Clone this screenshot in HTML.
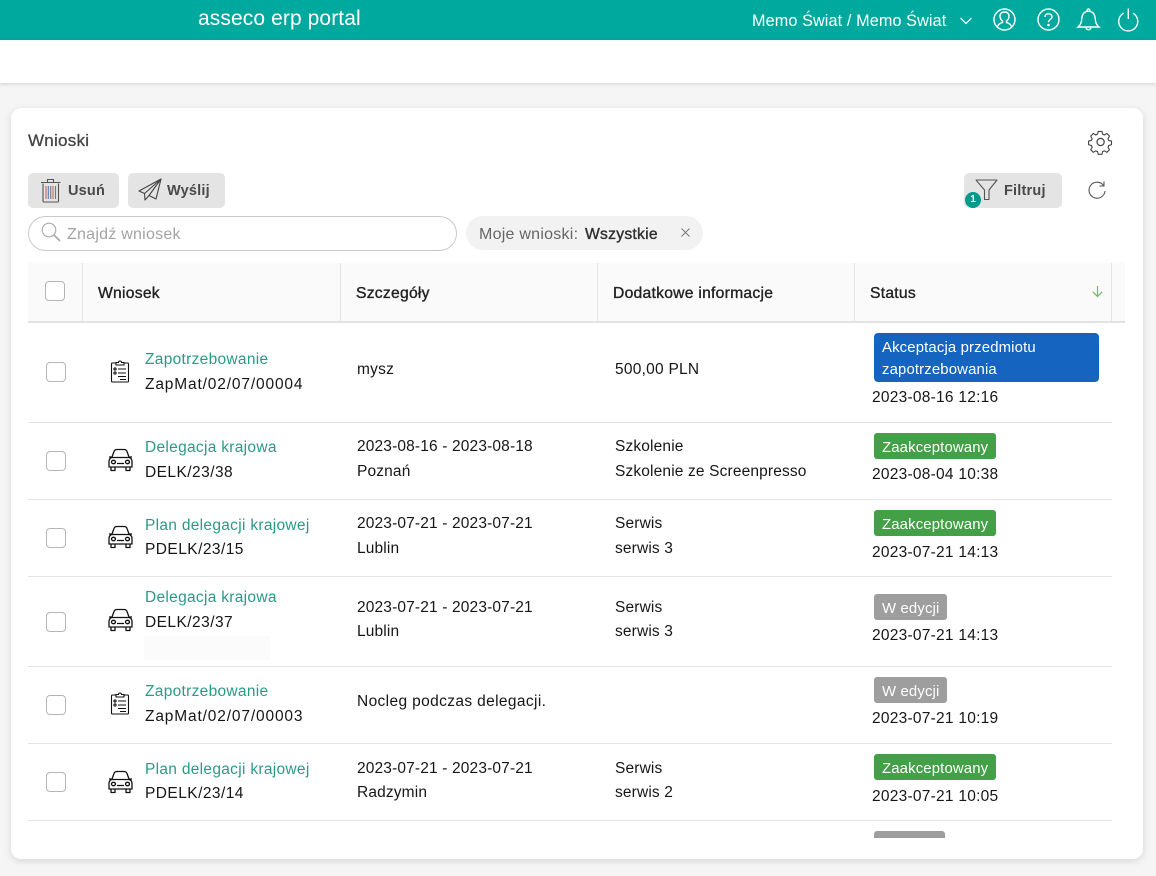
<!DOCTYPE html>
<html><head><meta charset="utf-8"><style>
*{box-sizing:border-box}
html,body{margin:0;padding:0}
body{width:1156px;height:876px;overflow:hidden;background:#f5f5f5;position:relative;font-family:"Liberation Sans",sans-serif;font-size:15.5px;color:#161616}
.a{position:absolute;white-space:nowrap}
.t{position:absolute;white-space:nowrap;line-height:20px;letter-spacing:.25px;margin-top:4px}
.g{color:#2a9a88;letter-spacing:.3px}
.b{font-weight:bold;color:#333;letter-spacing:.2px}
.h{font-size:15.7px;color:#222;-webkit-text-stroke:.35px #222}
.z{letter-spacing:.85px}
.k{letter-spacing:.45px}
.d{letter-spacing:.15px}
.cb{position:absolute;left:46px;width:20px;height:20px;border:1px solid #b5b5b5;border-radius:4px;background:#fff}
.ln{position:absolute;left:28px;width:1084px;height:1px;background:#e3e3e3}
.bd{position:absolute;left:874px;color:#fff;font-size:14.9px;line-height:22px;border-radius:3px;padding:0 8px;white-space:nowrap;height:26px;padding-top:3.5px;letter-spacing:.15px}
.gr{background:#43a047}.gy{background:#9e9e9e}
.btn{position:absolute;background:#e4e4e4;border-radius:5px;height:35px;top:173px}
svg{position:absolute;overflow:visible}
</style></head><body>
<div class="a" style="left:0;top:0;width:1156px;height:40px;background:#00a99d"></div>
<div class="a" style="left:0;top:40px;width:1156px;height:43px;background:#fff;box-shadow:0 1px 4px rgba(0,0,0,.15)"></div>
<div class="a" style="left:198px;top:7px;color:#fff;font-size:21px;line-height:24px;letter-spacing:.1px">asseco erp portal</div>
<div class="a" style="left:752px;top:11px;color:#fff;font-size:16.2px;line-height:20px;letter-spacing:.12px">Memo Świat / Memo Świat</div>
<svg style="left:960px;top:17px" width="12" height="8" fill="none" stroke="#fff" stroke-width="1.2"><path d="M.5 1 6 6.5 11.500 1"/></svg>
<svg style="left:993px;top:8px" width="23" height="23" fill="none" stroke="#fff" stroke-width="1.4"><circle cx="11.500" cy="11.500" r="10.500"/><path d="M4.500 19c.5-3 2.500-3.500 5-4.500v-1.500c-1.500-1-2.500-2.500-2.500-5 0-2.500 1.700-4 4.500-4s4.500 1.500 4.500 4c0 2.500-1 4-2.500 5v1.500c2.500 1 4.500 1.500 5 4.500"/></svg>
<svg style="left:1037px;top:8px" width="23" height="23" fill="none" stroke="#fff" stroke-width="1.4"><circle cx="11.500" cy="11.500" r="10.500"/><path d="M8 9c0-2 1.500-3.200 3.500-3.200s3.500 1.200 3.500 3c0 2.700-3.500 2.700-3.500 5.400"/><circle cx="11.500" cy="17" r=".6" fill="#fff"/></svg>
<svg style="left:1077px;top:8px" width="23" height="23" fill="none" stroke="#fff" stroke-width="1.4"><path d="M1 19c3-2.500 3.500-5 3.800-8.500C5.200 6 7.500 3.300 11.500 3.300S17.800 6 18.200 10.500c.3 3.500.8 6 3.800 8.500Z"/><path d="M10 3.300C10 1.800 10.700 1 11.500 1s1.500.8 1.500 2.300M9 19.500c.3 1.500 1.200 2.200 2.500 2.200s2.200-.7 2.500-2.200"/></svg>
<svg style="left:1118px;top:8px" width="21" height="23" fill="none" stroke="#fff" stroke-width="1.4"><path d="M5.500 5.200a9.500 9.500 0 1 0 9.500 0M10.300 0.500v10.500"/></svg>

<div class="a" style="left:11px;top:108px;width:1132px;height:751px;background:#fff;border-radius:10px;box-shadow:0 2px 8px rgba(0,0,0,.13)"></div>
<div class="t" style="left:28px;top:127px;font-size:17px;color:#444;-webkit-text-stroke:.3px #444">Wnioski</div>
<svg style="left:1089px;top:130px" width="24" height="24" fill="none" stroke="#444" stroke-width="1.200" stroke-linejoin="round"><path d="M9.500 1h4l.7 3 2 .9 2.700-1.600 2.800 2.800-1.600 2.700.8 2.100 3 .6v4l-3 .7-.8 2 1.600 2.700-2.800 2.800-2.700-1.600-2 .8-.7 3h-4l-.7-3-2-.8-2.700 1.600-2.800-2.800 1.600-2.700-.9-2-3-.7v-4l3-.6.9-2.100-1.600-2.700 2.800-2.800 2.700 1.600 2-.9Z" transform="translate(.5 .5) scale(.92)"/><circle cx="11.600" cy="12" r="3.600"/></svg>

<div class="btn" style="left:28px;width:91px"></div>
<svg style="left:40px;top:177px" width="22" height="26" fill="none" stroke="#555" stroke-width="1.100"><path d="M1 5.500h19.500M7.500 5V2.500h6V5M3 6.500V24a1 1 0 0 0 1 1h13.500a1 1 0 0 0 1-1V6.500"/><path d="M6 9v13" stroke="#c66"/><path d="M8.300 9v13" stroke="#57b"/><path d="M10.700 9v13" stroke="#777"/><path d="M13 9v13" stroke="#c66"/><path d="M15.500 9v13" stroke="#57b"/></svg>
<div class="t b" style="left:68px;top:177px;font-size:14.500px;color:#4a4a4a">Usuń</div>
<div class="btn" style="left:128px;width:97px"></div>
<svg style="left:138px;top:178px" width="24" height="24" fill="none" stroke="#444" stroke-width="1.100" stroke-linejoin="round"><path d="M1 13 23 1 18 21 11 17.500 7 22 6.500 15.500Z"/><path d="M23 1 6.500 15.500M23 1 11 17.500"/></svg>
<div class="t b" style="left:167px;top:177px;font-size:14.500px;color:#4a4a4a">Wyślij</div>
<div class="btn" style="left:964px;width:98px"></div>
<svg style="left:975px;top:179px" width="24" height="22" fill="none" stroke="#555" stroke-width="1.100" stroke-linejoin="round"><path d="M1 1h21l-8 10v9.500l-4.500 0V11Z"/></svg>
<div class="a" style="left:965px;top:192px;width:16px;height:16px;border-radius:50%;background:#00998c;color:#fff;font-size:10px;font-weight:bold;line-height:16px;text-align:center">1</div>
<div class="t b" style="left:1004px;top:177px;font-size:14.500px;color:#4a4a4a">Filtruj</div>
<svg style="left:1088px;top:181px" width="18" height="18" fill="none" stroke="#555" stroke-width="1.100"><path d="M15.500 4.500A8 8 0 1 0 17 10"/><path d="M16 .5V5h-4.500"/></svg>

<div class="a" style="left:28px;top:216px;width:429px;height:35px;border:1px solid #c9c9c9;border-radius:18px;background:#fff"></div>
<svg style="left:41px;top:222px" width="20" height="20" fill="none" stroke="#aaa" stroke-width="1.100"><circle cx="8" cy="8" r="6.800"/><path d="M13 13l6 6" stroke-width="1.800"/></svg>
<div class="t" style="left:67px;top:221px;color:#a3a3a3;font-size:16px">Znajdź wniosek</div>
<div class="a" style="left:466px;top:216px;width:237px;height:34px;background:#f2f2f2;border-radius:17px"></div>
<div class="t" style="left:479px;top:221px;color:#666;font-size:16px">Moje wnioski:</div>
<div class="t h" style="left:585px;top:221px;color:#333">Wszystkie</div>
<svg style="left:681px;top:228px" width="9" height="9" stroke="#777" stroke-width="1"><path d="M.5.500l8 8M8.500.500l-8 8"/></svg>

<div class="a" style="left:28px;top:263px;width:1097px;height:60px;background:#fafafa;border-bottom:2px solid #e3e3e3"></div>
<div class="a" style="left:82px;top:263px;width:1px;height:58px;background:#e6e6e6"></div>
<div class="a" style="left:340px;top:263px;width:1px;height:58px;background:#e6e6e6"></div>
<div class="a" style="left:597px;top:263px;width:1px;height:58px;background:#e6e6e6"></div>
<div class="a" style="left:854px;top:263px;width:1px;height:58px;background:#e6e6e6"></div>
<div class="a" style="left:1111px;top:263px;width:1px;height:58px;background:#e6e6e6"></div>
<div class="cb" style="left:45px;top:281px"></div>
<div class="t h" style="left:98px;top:280px">Wniosek</div>
<div class="t h" style="left:356px;top:280px">Szczegóły</div>
<div class="t h" style="left:613px;top:280px">Dodatkowe informacje</div>
<div class="t h" style="left:870px;top:280px">Status</div>
<svg style="left:1092px;top:286px" width="11" height="12" fill="none" stroke="#7cb85a" stroke-width="1.200"><path d="M5.500 0v10.500M.8 5.800l4.700 4.700 4.700-4.700"/></svg>

<div class="ln" style="top:422px"></div><div class="ln" style="top:499px"></div><div class="ln" style="top:576px"></div><div class="ln" style="top:666px"></div><div class="ln" style="top:743px"></div><div class="ln" style="top:820px"></div>

<svg width="0" height="0" style="left:0;top:0"><defs>
<g id="cl" fill="none" stroke="#111" stroke-width="1.100"><path d="M6 3H2.500a1 1 0 0 0-1 1v17a1 1 0 0 0 1 1h15a1 1 0 0 0 1-1V4a1 1 0 0 0-1-1H14"/><path d="M6 2.500h2.500C8.500 1.500 9 1 10 1s1.500.5 1.500 1.500H14V5H6Z"/><circle cx="5" cy="9" r="1.100"/><circle cx="5" cy="13" r="1.100"/><path d="M8 9h8M8 13h8M8 16.500h8M10 19.500h6"/></g>
<g id="car" fill="none" stroke="#111" stroke-width="1.300" stroke-linejoin="round"><path d="M4 9 6 3.500C6.500 2 7.500 1.500 9 1.500h7c1.500 0 2.500.5 3 2L21 9"/><path d="M3.500 9.500h18c1.500.7 2.500 2 2.500 4v5.500H1v-5.500c0-2 1-3.300 2.500-4Z"/><path d="M1 9h2.500M21.500 9H24M9 15.500h7M3 19v3.500h4V19M18 19v3.500h4V19"/><ellipse cx="5.500" cy="14" rx="2" ry="1.700"/><ellipse cx="19.500" cy="14" rx="2" ry="1.700"/></g>
</defs></svg>

<!-- row 1 -->
<div class="cb" style="top:362px"></div>
<svg style="left:110px;top:360px" width="20" height="24"><use href="#cl"/></svg>
<div class="t g" style="left:145px;top:346px">Zapotrzebowanie</div>
<div class="t z" style="left:145px;top:371px">ZapMat/02/07/00004</div>
<div class="t" style="left:357px;top:356px">mysz</div>
<div class="t" style="left:615px;top:356px">500,00 PLN</div>
<div class="bd" style="top:333px;width:225px;height:49px;background:#1565c0;white-space:normal;line-height:22px;border-radius:4px">Akceptacja przedmiotu<br>zapotrzebowania</div>
<div class="t" style="left:872px;top:384px">2023-08-16 12:16</div>
<!-- row 2 -->
<div class="cb" style="top:451px"></div>
<svg style="left:108px;top:448px" width="25" height="24"><use href="#car"/></svg>
<div class="t g" style="left:145px;top:434px">Delegacja krajowa</div>
<div class="t k" style="left:145px;top:459px">DELK/23/38</div>
<div class="t d" style="left:357px;top:433px">2023-08-16 - 2023-08-18</div>
<div class="t d" style="left:357px;top:458px">Poznań</div>
<div class="t d" style="left:615px;top:433px">Szkolenie</div>
<div class="t d" style="left:615px;top:458px">Szkolenie ze Screenpresso</div>
<div class="bd gr" style="top:433px">Zaakceptowany</div>
<div class="t" style="left:872px;top:461px">2023-08-04 10:38</div>
<!-- row 3 -->
<div class="cb" style="top:528px"></div>
<svg style="left:108px;top:525px" width="25" height="24"><use href="#car"/></svg>
<div class="t g" style="left:145px;top:512px">Plan delegacji krajowej</div>
<div class="t k" style="left:145px;top:536px">PDELK/23/15</div>
<div class="t d" style="left:357px;top:510px">2023-07-21 - 2023-07-21</div>
<div class="t d" style="left:357px;top:535px">Lublin</div>
<div class="t d" style="left:615px;top:510px">Serwis</div>
<div class="t d" style="left:615px;top:535px">serwis 3</div>
<div class="bd gr" style="top:510px">Zaakceptowany</div>
<div class="t" style="left:872px;top:539px">2023-07-21 14:13</div>
<!-- row 4 -->
<div class="cb" style="top:612px"></div>
<svg style="left:108px;top:608px" width="25" height="24"><use href="#car"/></svg>
<div class="t g" style="left:145px;top:584px">Delegacja krajowa</div>
<div class="t k" style="left:145px;top:609px">DELK/23/37</div>
<div class="a" style="left:144px;top:636px;width:126px;height:24px;background:#fbfbfb"></div>
<div class="t d" style="left:357px;top:594px">2023-07-21 - 2023-07-21</div>
<div class="t d" style="left:357px;top:618px">Lublin</div>
<div class="t d" style="left:615px;top:594px">Serwis</div>
<div class="t d" style="left:615px;top:618px">serwis 3</div>
<div class="bd gy" style="top:594px">W edycji</div>
<div class="t" style="left:872px;top:622px">2023-07-21 14:13</div>
<!-- row 5 -->
<div class="cb" style="top:695px"></div>
<svg style="left:110px;top:692px" width="20" height="24"><use href="#cl"/></svg>
<div class="t g" style="left:145px;top:678px">Zapotrzebowanie</div>
<div class="t z" style="left:145px;top:703px">ZapMat/02/07/00003</div>
<div class="t" style="left:357px;top:688px;letter-spacing:.37px">Nocleg podczas delegacji.</div>
<div class="bd gy" style="top:677px">W edycji</div>
<div class="t" style="left:872px;top:705px">2023-07-21 10:19</div>
<!-- row 6 -->
<div class="cb" style="top:772px"></div>
<svg style="left:108px;top:770px" width="25" height="24"><use href="#car"/></svg>
<div class="t g" style="left:145px;top:756px">Plan delegacji krajowej</div>
<div class="t k" style="left:145px;top:780px">PDELK/23/14</div>
<div class="t d" style="left:357px;top:755px">2023-07-21 - 2023-07-21</div>
<div class="t d" style="left:357px;top:779px">Radzymin</div>
<div class="t d" style="left:615px;top:755px">Serwis</div>
<div class="t d" style="left:615px;top:779px">serwis 2</div>
<div class="bd gr" style="top:754px">Zaakceptowany</div>
<div class="t" style="left:872px;top:783px">2023-07-21 10:05</div>
<!-- row 7 clipped -->
<div class="a" style="left:874px;top:831px;width:71px;height:7px;background:#9e9e9e;border-radius:3px 3px 0 0"></div>
</body></html>
